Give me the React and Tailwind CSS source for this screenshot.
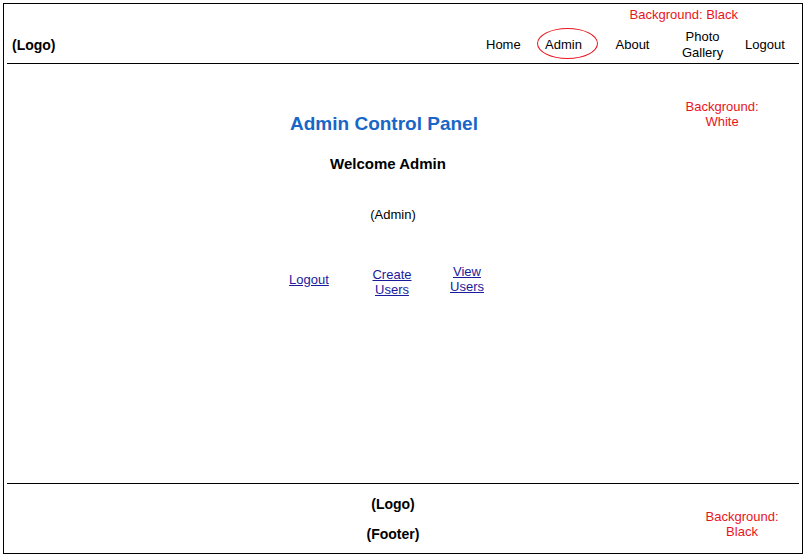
import React from 'react';

function App() {
  const red = 'text-[#e8141c]';

  return (
    <div className="bg-white w-[805px] h-[556px] pt-[3px] pl-[3px] font-['Liberation_Sans',Arial,sans-serif] text-black">
      <div className="w-[800px] h-[551px] border border-black flex flex-col px-[3px]">
        {/* Header */}
        <div className="h-[60px] border-b border-black flex flex-col">
          <div className={`h-[20px] pt-[3px] flex justify-end pr-[61px] text-[13px] leading-[15px] ${red}`}>
            Background: Black
          </div>
          <div className="h-[39px] pt-[2px] flex items-center">
            <div className="pl-[5px] text-[14px] font-bold leading-[16px]">(Logo)</div>
            <nav className="ml-auto flex items-center text-[13px] leading-[16px] pr-[14px]">
              <span className="w-[34px] text-center">Home</span>
              <span className="ml-[17px] -mt-[2px] w-[61px] h-[31px] rounded-[50%] border border-[#e8141c] flex items-center justify-center pt-[3px] pr-[8px]">
                Admin
              </span>
              <span className="ml-[17px] w-[35px] text-center">About</span>
              <span className="ml-[32px] w-[41px] text-center">
                Photo
                <br />
                Gallery
              </span>
              <span className="ml-[22px] w-[40px] text-center">Logout</span>
            </nav>
          </div>
        </div>

        {/* Main */}
        <div className="flex-1 flex">
          <div className="ml-[177px] w-[400px] flex flex-col items-center pt-[49px]">
            <h1 className="text-[19px] leading-[22px] font-bold text-[#1866c6]">Admin Control Panel</h1>
            <h2 className="mt-[20px] ml-[8px] text-[15px] leading-[18px] font-bold">Welcome Admin</h2>
            <p className="mt-[34px] ml-[18px] text-[13px] leading-[15px]">(Admin)</p>
            <div className="mt-[42px] self-start pl-[105px] flex items-start text-[13px] leading-[15px] text-[#1a1a9c]">
              <a href="#" className="mt-[8px] w-[40px] text-center underline">Logout</a>
              <a href="#" className="mt-[3px] ml-[43px] w-[40px] text-center underline">
                Create
                <br />
                Users
              </a>
              <a href="#" className="ml-[38px] w-[34px] text-center underline">
                View
                <br />
                Users
              </a>
            </div>
          </div>
          <div className={`ml-auto w-[152px] pr-[2px] pt-[35px] text-center text-[13px] leading-[15px] ${red}`}>
            Background:
            <br />
            White
          </div>
        </div>

        {/* Footer */}
        <div className="h-[70px] border-t border-black flex">
          <div className="ml-[286px] w-[200px] flex flex-col items-center pt-[12px] text-[14px] leading-[16px] font-bold">
            <span>(Logo)</span>
            <span className="mt-[14px]">(Footer)</span>
          </div>
          <div className={`ml-auto mr-[7px] w-[100px] pt-[25px] text-center text-[13px] leading-[15px] ${red}`}>
            Background:
            <br />
            Black
          </div>
        </div>
      </div>
    </div>
  );
}

export default App;
